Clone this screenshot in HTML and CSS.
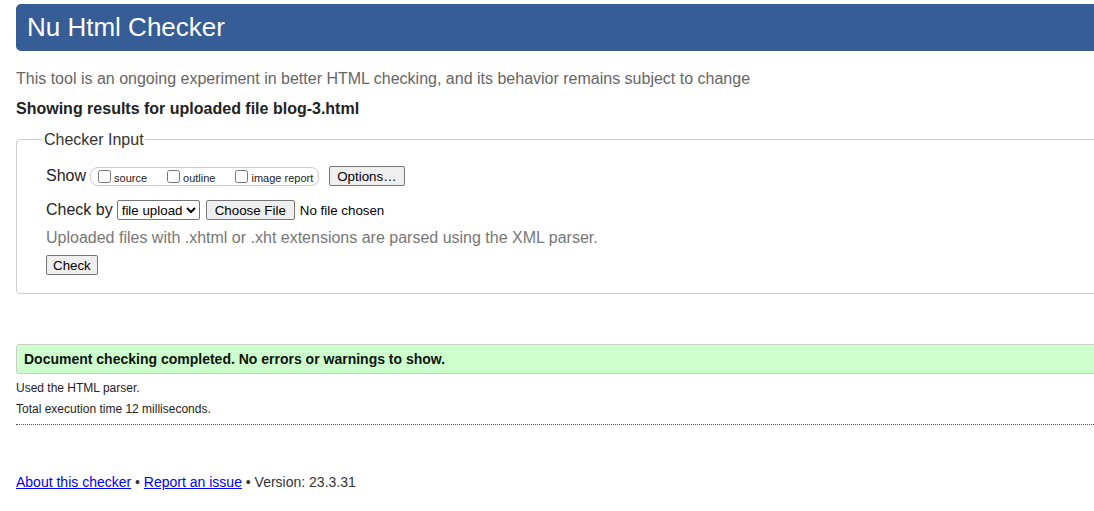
FILE: index.html
```html
<!DOCTYPE html>
<html>
<head>
<meta charset="utf-8">
<title>Nu Html Checker</title>
<link rel="stylesheet" href="styles.css">
</head>
<body>
<div class="page">
  <h1 class="title">Nu Html Checker</h1>
  <p class="intro">This tool is an ongoing experiment in better HTML checking, and its behavior remains subject to change</p>
  <p class="results-for">Showing results for uploaded file blog-3.html</p>
  <fieldset class="input">
    <legend>Checker Input</legend>
    <div class="row">
      <span class="lbl">Show</span>
      <span class="showgroup"><label class="opt"><input type="checkbox">source</label><label class="opt"><input type="checkbox">outline</label><label class="opt"><input type="checkbox">image report</label></span>
      <button class="btn btn-opt">Options…</button>
    </div>
    <div class="row row2">
      <span class="lbl">Check by</span>
      <select class="sel"><option>file upload</option></select>
      <button class="btn">Choose File</button>
      <span class="nofile">No file chosen</span>
    </div>
    <p class="hint">Uploaded files with .xhtml or .xht extensions are parsed using the XML parser.</p>
    <button class="btn btn-check">Check</button>
  </fieldset>
  <p class="success">Document checking completed. No errors or warnings to show.</p>
  <p class="stat">Used the HTML parser.</p>
  <p class="stat">Total execution time 12 milliseconds.</p>
  <hr class="dots">
  <p class="footer"><a href="#">About this checker</a> • <a href="#">Report an issue</a> • Version: 23.3.31</p>
</div>
</body>
</html>
```

FILE: styles.css
```css
html { overflow: hidden; }
body {
  margin: 0;
  padding: 4px 0 0 16px;
  font-family: "Liberation Sans", Arial, sans-serif;
  color: #222;
  background: #fff;
}
.page {
  width: 1100px;
}
.title {
  margin: 0;
  height: 47px;
  box-sizing: border-box;
  padding: 8px 11px 0;
  background: #365d95;
  color: #fff;
  font-weight: normal;
  font-size: 26px;
  line-height: 30px;
  border-radius: 5px;
}
.intro {
  margin: 18px 0 0;
  font-size: 16px;
  line-height: 19px;
  color: #666;
}
.results-for {
  margin: 11px 0 0;
  font-size: 16px;
  line-height: 19px;
  font-weight: bold;
  color: #222;
}
.input {
  margin: 12px 0 0;
  padding: 16px 29px 18px;
  border: 1px solid #ccc;
  border-radius: 4px;
  min-width: 0;
}
.input legend {
  padding: 0 1px;
  margin-left: -3px;
  font-size: 16px;
  color: #333;
  line-height: 19px;
}
.row {
  display: flex;
  align-items: center;
  height: 22px;
}
.row2 { margin-top: 12px; }
.lbl {
  font-size: 16px;
  color: #222;
  margin-right: 4px;
}
.showgroup {
  display: inline-block;
  height: 17px;
  line-height: 17px;
  border: 1px solid #ccc;
  border-radius: 8px;
  padding: 0 5px 0 2px;
  margin-right: 10px;
  white-space: nowrap;
}
.opt {
  font-size: 11px;
  color: #222;
  margin-right: 15px;
}
.opt:last-child { margin-right: 0; }
.opt input {
  margin: 0 3px 0 5px;
  width: 13px;
  height: 13px;
  vertical-align: -1px;
}
.btn {
  font-family: "Liberation Sans", Arial, sans-serif;
  font-size: 13.33px;
  color: #000;
  background: #efefef;
  border: 1px solid #767676;
  border-radius: 2px;
  padding: 1px 8px;
  height: 20px;
}
.btn-opt { padding: 1px 7px; }
.btn-check { padding: 1px 6px; }
.sel {
  font-family: "Liberation Sans", Arial, sans-serif;
  font-size: 13.33px;
  height: 20px;
  border: 1px solid #767676;
  border-radius: 2px;
  background: #fff;
  margin-right: 6px;
}
.nofile {
  font-size: 13.33px;
  margin-left: 5px;
  color: #000;
}
.hint {
  margin: 7px 0 8px;
  font-size: 16px;
  line-height: 19px;
  color: #777;
}
.success {
  margin: 50px 0 0;
  height: 30px;
  box-sizing: border-box;
  padding: 6px 7px;
  background: #ccffcc;
  border: 1px solid #ccc;
  border-radius: 3px 0 0 3px;
  font-size: 14px;
  font-weight: bold;
  line-height: 17px;
  color: #111;
}
.stat {
  margin: 7px 0 0;
  font-size: 12px;
  line-height: 14px;
  color: #222;
}
.dots {
  margin: 8px 0 0;
  border: 0;
  border-top: 1px dotted #555;
  height: 0;
}
.footer {
  margin: 49px 0 0;
  font-size: 14px;
  line-height: 17px;
  color: #333;
}
.footer a { color: #00e; }
```
